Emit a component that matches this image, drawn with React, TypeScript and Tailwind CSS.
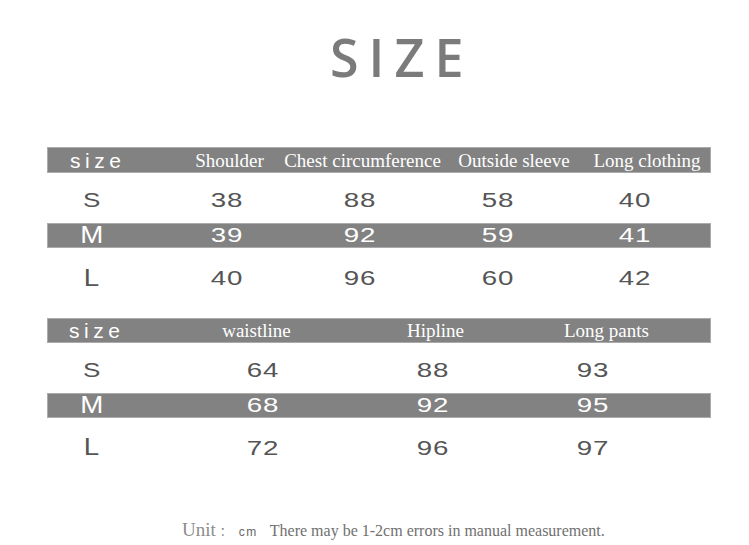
const sans = "font-['Liberation_Sans',Arial,sans-serif]";

function Num({ children }: { children: React.ReactNode }) {
  return (
    <span className={`${sans} inline-block scale-x-[1.35] text-[20.5px] leading-none tracking-[0.5px] text-[#555555]`}>
      {children}
    </span>
  );
}

function SizeS() {
  return (
    <span className={`${sans} inline-block scale-x-[1.3] text-[20px] leading-none text-[#555555]`}>S</span>
  );
}

function SizeBig({ children, white }: { children: React.ReactNode; white?: boolean }) {
  return (
    <span
      className={`${sans} inline-block scale-x-[1.18] text-[23.5px] leading-none ${white ? "text-white" : "text-[#555555]"}`}
    >
      {children}
    </span>
  );
}

function NumW({ children }: { children: React.ReactNode }) {
  return (
    <span className={`${sans} inline-block scale-x-[1.35] text-[20.5px] leading-none tracking-[0.5px] text-white`}>
      {children}
    </span>
  );
}

function HeadSize() {
  return (
    <span className={`${sans} text-[21px] leading-none tracking-[4.5px] text-white`}>size</span>
  );
}

function HeadLabel({ children }: { children: React.ReactNode }) {
  return (
    <span className="font-['Liberation_Serif','Times_New_Roman',serif] text-[19px] leading-none text-white">
      {children}
    </span>
  );
}

export default function App() {
  return (
    <div className="w-[749px] h-[545px] bg-white overflow-hidden flex flex-col">
      <div className="mt-[31px] h-[52px] pl-[330px] font-['Open_Sans',sans-serif] font-semibold text-[52px] leading-none tracking-[10px] text-[#7b7b7b] whitespace-nowrap">
        SIZE
      </div>

      {/* Table 1 */}
      <div className="mt-[64px] ml-[47px] w-[664px] flex flex-col">
        <div className="h-[26px] flex items-center bg-[#828282] border border-[#ababab]">
          <div className="w-[99.5px] shrink-0 flex justify-center whitespace-nowrap"><HeadSize /></div>
          <div className="w-[164px] shrink-0 flex justify-center whitespace-nowrap"><HeadLabel>Shoulder</HeadLabel></div>
          <div className="w-[102px] shrink-0 flex justify-center whitespace-nowrap"><HeadLabel>Chest circumference</HeadLabel></div>
          <div className="w-[201px] shrink-0 flex justify-center whitespace-nowrap"><HeadLabel>Outside sleeve</HeadLabel></div>
          <div className="w-[65px] shrink-0 flex justify-center whitespace-nowrap"><HeadLabel>Long clothing</HeadLabel></div>
        </div>
        <div className="h-[50px] pt-[4px] flex items-center border border-transparent">
          <div className="w-[87.4px] shrink-0 flex justify-center"><SizeS /></div>
          <div className="w-[182.2px] shrink-0 flex justify-center"><Num>38</Num></div>
          <div className="w-[84.8px] shrink-0 flex justify-center"><Num>88</Num></div>
          <div className="w-[190.2px] shrink-0 flex justify-center"><Num>58</Num></div>
          <div className="w-[83.8px] shrink-0 flex justify-center"><Num>40</Num></div>
        </div>
        <div className="h-[25px] flex items-center bg-[#828282] border border-[#ababab]">
          <div className="w-[87.4px] shrink-0 flex justify-center"><SizeBig white>M</SizeBig></div>
          <div className="w-[182.2px] shrink-0 flex justify-center"><NumW>39</NumW></div>
          <div className="w-[84.8px] shrink-0 flex justify-center"><NumW>92</NumW></div>
          <div className="w-[190.2px] shrink-0 flex justify-center"><NumW>59</NumW></div>
          <div className="w-[83.8px] shrink-0 flex justify-center"><NumW>41</NumW></div>
        </div>
        <div className="h-[61px] flex items-center border border-transparent">
          <div className="w-[87.4px] shrink-0 flex justify-center"><SizeBig>L</SizeBig></div>
          <div className="w-[182.2px] shrink-0 flex justify-center"><Num>40</Num></div>
          <div className="w-[84.8px] shrink-0 flex justify-center"><Num>96</Num></div>
          <div className="w-[190.2px] shrink-0 flex justify-center"><Num>60</Num></div>
          <div className="w-[83.8px] shrink-0 flex justify-center"><Num>42</Num></div>
        </div>
      </div>

      {/* Table 2 */}
      <div className="mt-[9px] ml-[47px] w-[664px] flex flex-col">
        <div className="h-[25px] flex items-center bg-[#828282] border border-[#ababab]">
          <div className="w-[97.5px] shrink-0 flex justify-center whitespace-nowrap"><HeadSize /></div>
          <div className="w-[222px] shrink-0 flex justify-center whitespace-nowrap"><HeadLabel>waistline</HeadLabel></div>
          <div className="w-[136px] shrink-0 flex justify-center whitespace-nowrap"><HeadLabel>Hipline</HeadLabel></div>
          <div className="w-[206px] shrink-0 flex justify-center whitespace-nowrap"><HeadLabel>Long pants</HeadLabel></div>
        </div>
        <div className="h-[50px] pt-[4px] flex items-center border border-transparent">
          <div className="w-[87.4px] shrink-0 flex justify-center"><SizeS /></div>
          <div className="w-[255.2px] shrink-0 flex justify-center"><Num>64</Num></div>
          <div className="w-[84.8px] shrink-0 flex justify-center"><Num>88</Num></div>
          <div className="w-[234.6px] shrink-0 flex justify-center"><Num>93</Num></div>
        </div>
        <div className="h-[25px] flex items-center bg-[#828282] border border-[#ababab]">
          <div className="w-[87.4px] shrink-0 flex justify-center"><SizeBig white>M</SizeBig></div>
          <div className="w-[255.2px] shrink-0 flex justify-center"><NumW>68</NumW></div>
          <div className="w-[84.8px] shrink-0 flex justify-center"><NumW>92</NumW></div>
          <div className="w-[234.6px] shrink-0 flex justify-center"><NumW>95</NumW></div>
        </div>
        <div className="h-[60px] flex items-center border border-transparent">
          <div className="w-[87.4px] shrink-0 flex justify-center"><SizeBig>L</SizeBig></div>
          <div className="w-[255.2px] shrink-0 flex justify-center"><Num>72</Num></div>
          <div className="w-[84.8px] shrink-0 flex justify-center"><Num>96</Num></div>
          <div className="w-[234.6px] shrink-0 flex justify-center"><Num>97</Num></div>
        </div>
      </div>

      {/* Footer */}
      <div className="mt-[42px] pl-[182px] flex items-baseline whitespace-nowrap">
        <span className="font-['Liberation_Serif',serif] text-[19px] leading-none text-[#8c8c8c]">Unit</span>
        <span className="ml-[4px] font-['Noto_Sans_CJK_SC',sans-serif] text-[12px] leading-none text-[#777777]">：</span>
        <span className={`${sans} ml-[7px] text-[12px] leading-none tracking-[1.5px] text-[#666666]`}>cm</span>
        <span className="ml-[12px] font-['Liberation_Serif',serif] text-[16px] leading-none text-[#707070]">
          There may be 1-2cm errors in manual measurement.
        </span>
      </div>
    </div>
  );
}
